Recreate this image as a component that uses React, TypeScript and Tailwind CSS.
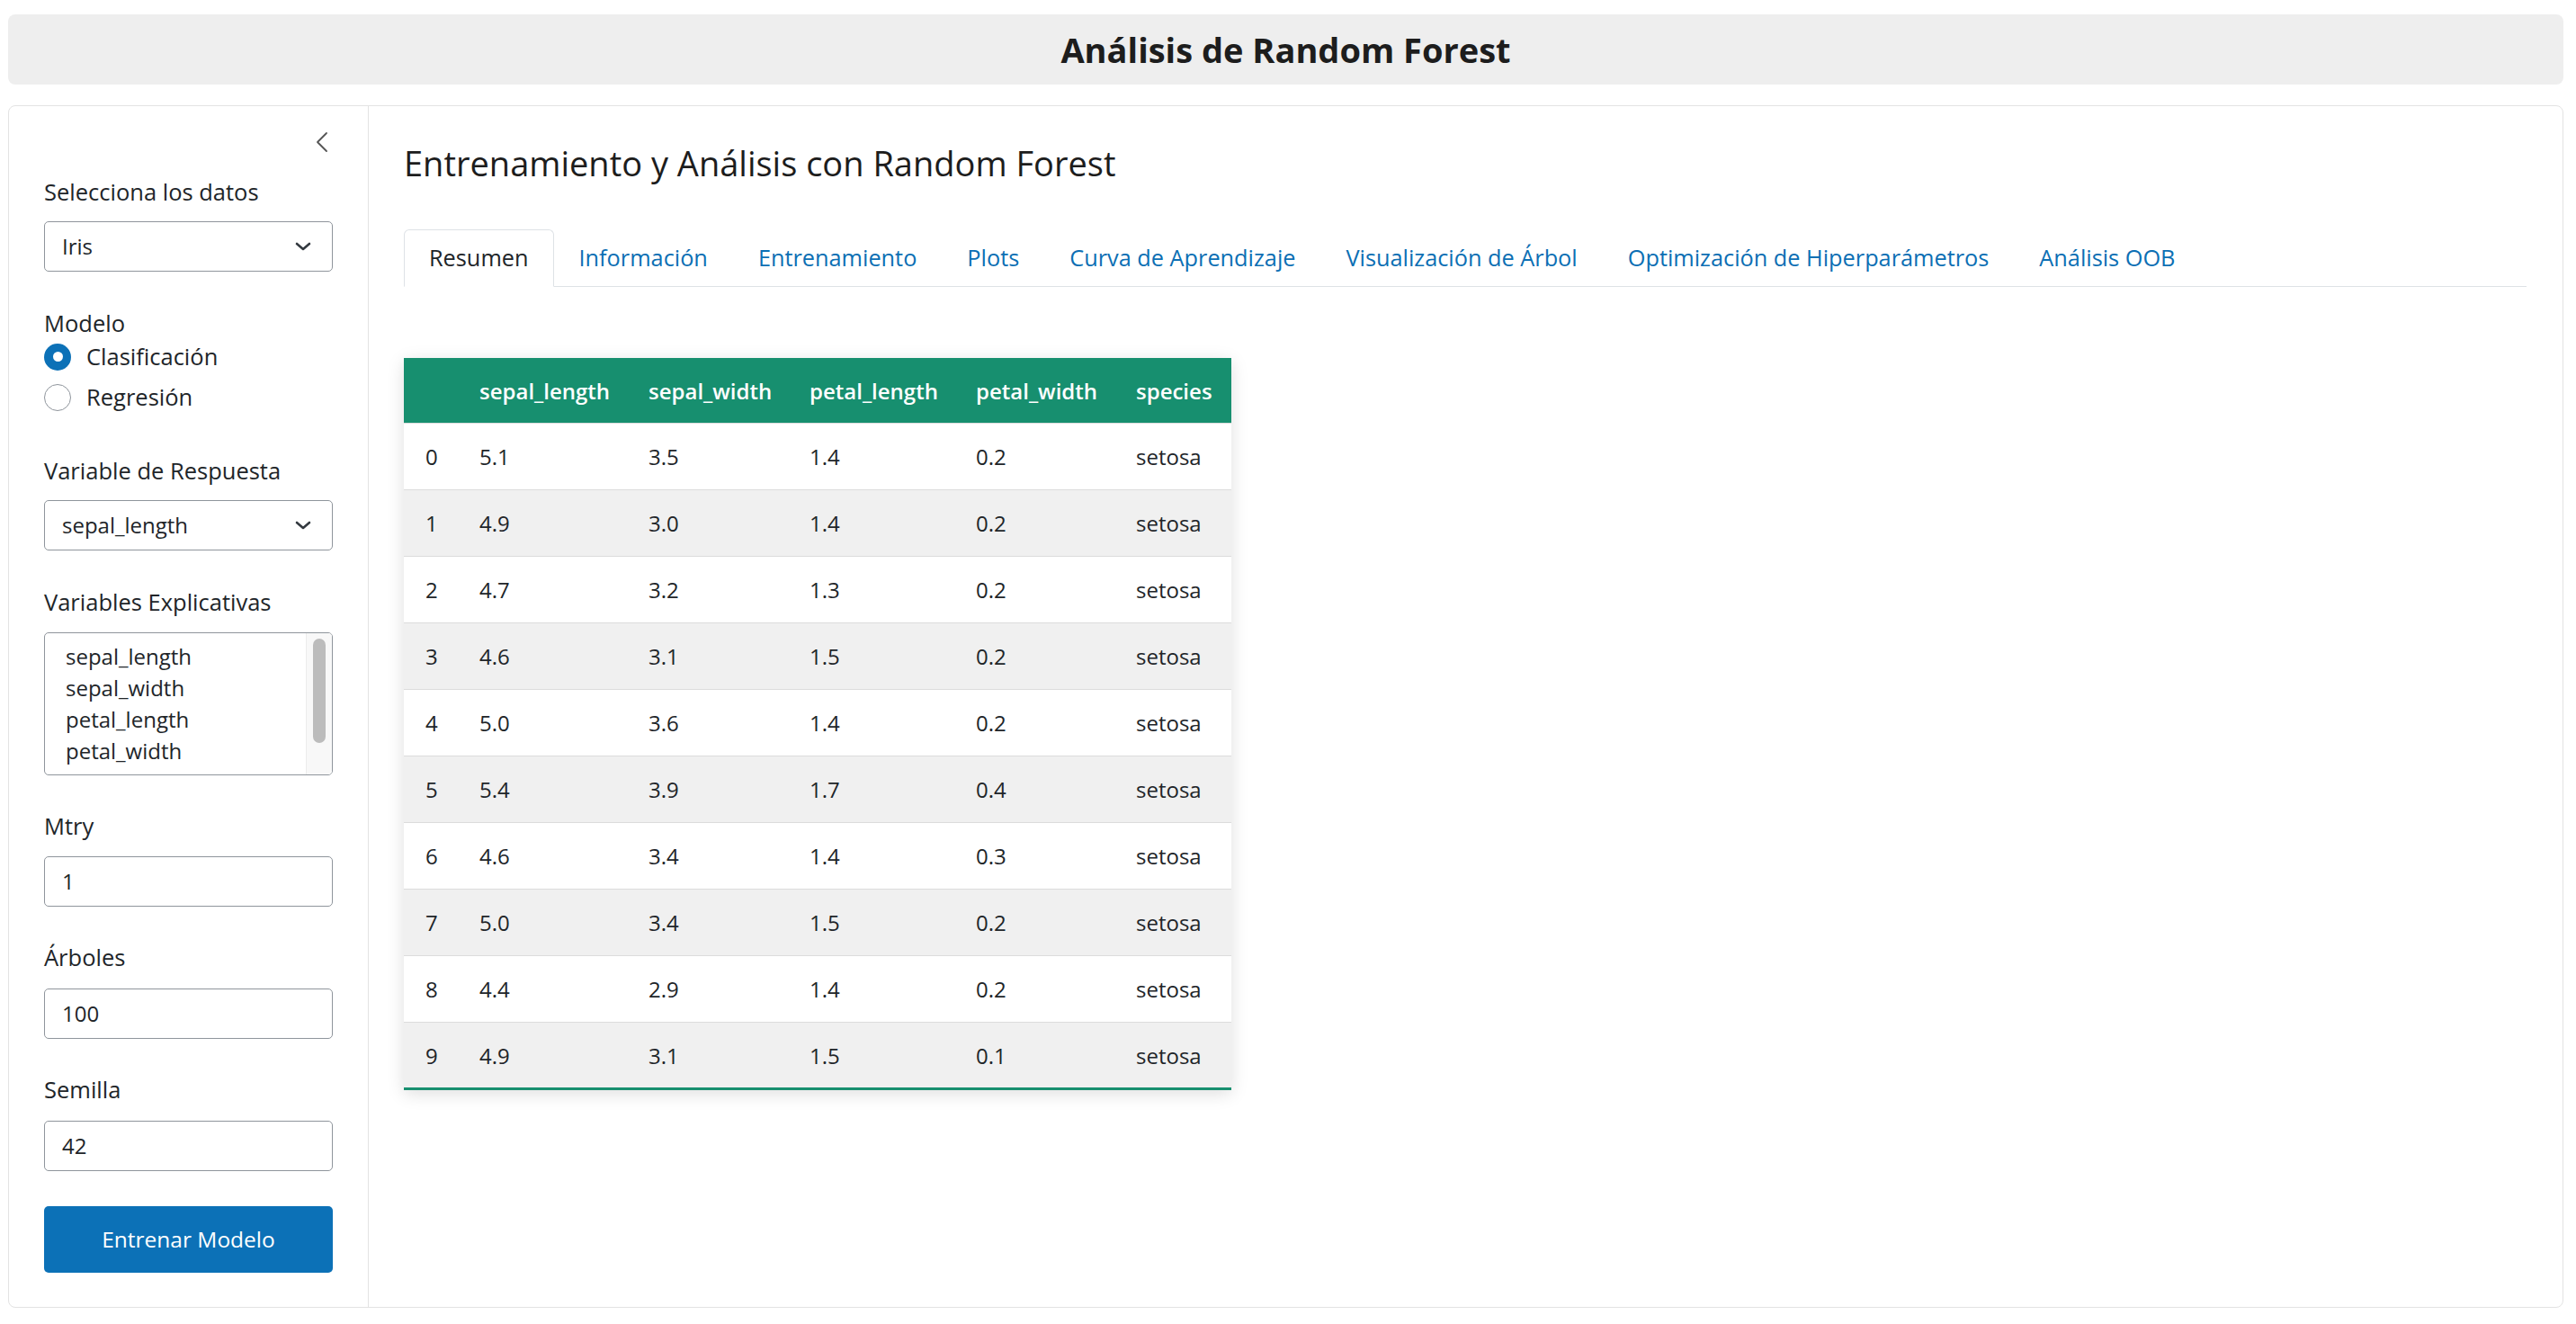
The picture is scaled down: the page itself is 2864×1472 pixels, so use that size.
import { useState } from "react";

const rows = [
  ["0", "5.1", "3.5", "1.4", "0.2", "setosa"],
  ["1", "4.9", "3.0", "1.4", "0.2", "setosa"],
  ["2", "4.7", "3.2", "1.3", "0.2", "setosa"],
  ["3", "4.6", "3.1", "1.5", "0.2", "setosa"],
  ["4", "5.0", "3.6", "1.4", "0.2", "setosa"],
  ["5", "5.4", "3.9", "1.7", "0.4", "setosa"],
  ["6", "4.6", "3.4", "1.4", "0.3", "setosa"],
  ["7", "5.0", "3.4", "1.5", "0.2", "setosa"],
  ["8", "4.4", "2.9", "1.4", "0.2", "setosa"],
  ["9", "4.9", "3.1", "1.5", "0.1", "setosa"],
];

const tabs = [
  "Resumen",
  "Información",
  "Entrenamiento",
  "Plots",
  "Curva de Aprendizaje",
  "Visualización de Árbol",
  "Optimización de Hiperparámetros",
  "Análisis OOB",
];

function Chevron() {
  return (
    <svg width="18" height="10" viewBox="0 0 18 10" className="shrink-0">
      <polyline
        points="2,2 9,8 16,2"
        fill="none"
        stroke="#343a40"
        strokeWidth="2.6"
        strokeLinecap="round"
        strokeLinejoin="round"
      />
    </svg>
  );
}

function SelectBox({ value }: { value: string }) {
  return (
    <div className="mt-[12px] h-[56px] flex items-center justify-between pl-[19px] pr-[23px] border border-[#8f959c] rounded-[5px] bg-white text-[24px]">
      <span>{value}</span>
      <Chevron />
    </div>
  );
}

function NumInput({ value, mt }: { value: string; mt: string }) {
  return (
    <div
      className={
        mt +
        " h-[56px] flex items-center pl-[19px] border border-[#8f959c] rounded-[5px] bg-white text-[24px]"
      }
    >
      {value}
    </div>
  );
}

function Label({ text, mt }: { text: string; mt: string }) {
  return <div className={mt + " h-[42px] leading-[42px] text-[25.5px]"}>{text}</div>;
}

function Radio({ checked, label }: { checked: boolean; label: string }) {
  return (
    <div className="h-[45px] flex items-center gap-[17px]">
      {checked ? (
        <span className="w-[30px] h-[30px] rounded-full bg-[#0c71b7] flex items-center justify-center">
          <span className="w-[11px] h-[11px] rounded-full bg-white" />
        </span>
      ) : (
        <span className="w-[30px] h-[30px] rounded-full border border-[#8f959c] bg-white" />
      )}
      <span className="text-[25.5px]">{label}</span>
    </div>
  );
}

export default function App() {
  const [active] = useState(0);

  return (
    <div className="min-h-screen bg-white font-['Open_Sans',sans-serif] text-[#212529] pt-[16px] pl-[9px] pr-[14px]">
      <header className="h-[78px] rounded-[8px] bg-[#eeeeee] flex items-center justify-center">
        <h1 className="text-[38px] font-bold text-[#1d1d1d]">Análisis de Random Forest</h1>
      </header>

      <div className="mt-[23px] h-[1337px] border border-[#e3e3e3] rounded-[8px] flex">
        {/* sidebar */}
        <aside className="w-[400px] shrink-0 border-r border-[#e3e3e3] px-[39px] pt-[28px] flex flex-col">
          <div className="flex justify-end pr-[5px]">
            <svg width="14" height="24" viewBox="0 0 14 24">
              <polyline
                points="12,2 2,12 12,22"
                fill="none"
                stroke="#555"
                strokeWidth="1.8"
                strokeLinecap="round"
                strokeLinejoin="round"
              />
            </svg>
          </div>

          <Label text="Selecciona los datos" mt="mt-[22px]" />
          <SelectBox value="Iris" />

          <div className="mt-[42px] leading-[30px] text-[25.5px]">Modelo</div>
          <Radio checked label="Clasificación" />
          <Radio checked={false} label="Regresión" />

          <Label text="Variable de Respuesta" mt="mt-[38px]" />
          <SelectBox value="sepal_length" />

          <Label text="Variables Explicativas" mt="mt-[36px]" />
          <div className="mt-[13px] h-[159px] border border-[#8f959c] rounded-[5px] bg-white flex overflow-hidden">
            <div className="flex-1 pl-[23px] pt-[8px] text-[24px] leading-[35px] overflow-hidden">
              <div>sepal_length</div>
              <div>sepal_width</div>
              <div>petal_length</div>
              <div>petal_width</div>
              <div>species</div>
            </div>
            <div className="w-[29px] border-l border-[#ececec] bg-[#f8f8f8] px-[7px] pt-[6px]">
              <div className="h-[116px] rounded-full bg-[#bcbcbc]" />
            </div>
          </div>

          <Label text="Mtry" mt="mt-[35px]" />
          <NumInput value="1" mt="mt-[13px]" />

          <Label text="Árboles" mt="mt-[35px]" />
          <NumInput value="100" mt="mt-[14px]" />

          <Label text="Semilla" mt="mt-[35px]" />
          <NumInput value="42" mt="mt-[14px]" />

          <button className="mt-[39px] h-[74px] rounded-[5px] bg-[#0c71b7] text-white text-[24.5px] font-medium">
            Entrenar Modelo
          </button>
        </aside>

        {/* main */}
        <main className="flex-1 pl-[39px] pr-[40px] pt-[40px]">
          <h2 className="text-[38px] leading-[46px] text-[#1d1d1d]">
            Entrenamiento y Análisis con Random Forest
          </h2>

          <nav className="mt-[51px] flex border-b border-[#dee2e6]">
            {tabs.map((t, i) => (
              <div
                key={t}
                className={
                  i === active
                    ? "h-[64px] px-[27px] flex items-center text-[25.3px] text-[#212529] bg-white border border-[#dee2e6] border-b-white rounded-t-[6px] mb-[-1px]"
                    : "h-[64px] px-[27px] flex items-center text-[25.3px] text-[#0c6fb4] border border-transparent mb-[-1px]"
                }
              >
                {t}
              </div>
            ))}
          </nav>

          <div className="mt-[79px] w-[920px] shadow-[0_4px_18px_rgba(0,0,0,0.13)]">
            <table className="w-[920px] table-fixed border-collapse text-[24px] text-left">
              <thead>
                <tr className="h-[72px] bg-[#178f6f] text-white">
                  <th className="w-[60px] pl-[24px] pt-[2px]"></th>
                  <th className="w-[188px] pl-[24px] pt-[2px] font-semibold">sepal_length</th>
                  <th className="w-[179px] pl-[24px] pt-[2px] font-semibold">sepal_width</th>
                  <th className="w-[185px] pl-[24px] pt-[2px] font-semibold">petal_length</th>
                  <th className="w-[178px] pl-[24px] pt-[2px] font-semibold">petal_width</th>
                  <th className="w-[130px] pl-[24px] pt-[2px] font-semibold">species</th>
                </tr>
              </thead>
              <tbody className="border-b-[3px] border-[#178f6f]">
                {rows.map((r, i) => (
                  <tr
                    key={r[0]}
                    className={
                      i % 2 === 1
                        ? "h-[74px] bg-[#f0f0f0] border-t border-[#dcdcdc]"
                        : "h-[74px] bg-white border-t border-[#dcdcdc]"
                    }
                  >
                    {r.map((c, j) => (
                      <td key={j} className="pl-[24px] pt-[2px]">
                        {c}
                      </td>
                    ))}
                  </tr>
                ))}
              </tbody>
            </table>
          </div>
        </main>
      </div>
    </div>
  );
}
